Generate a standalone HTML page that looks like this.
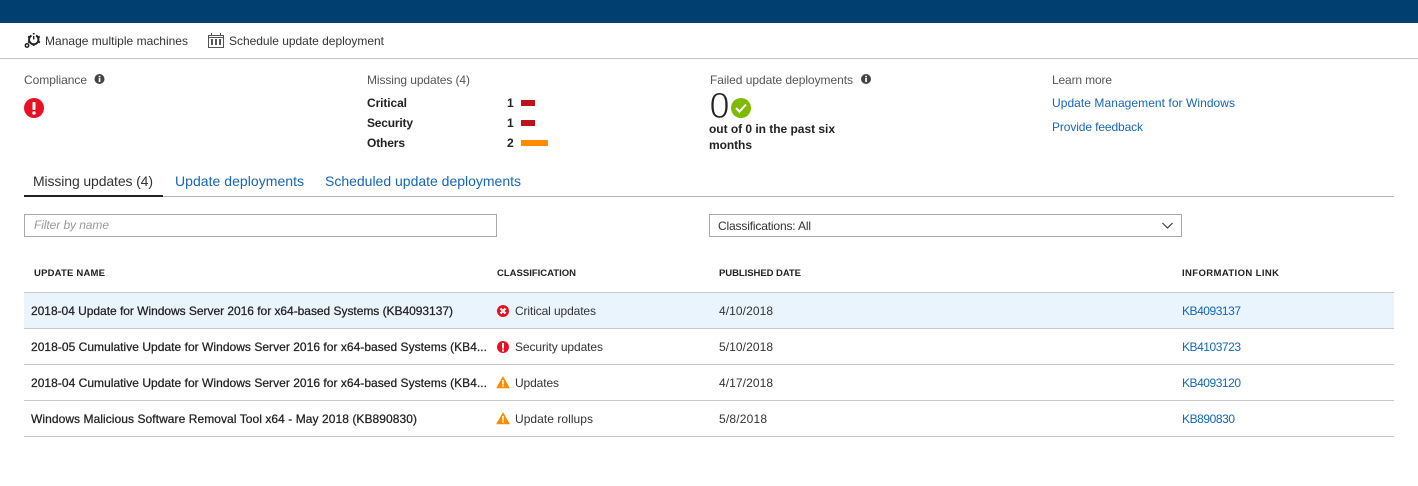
<!DOCTYPE html>
<html><head><meta charset="utf-8"><style>
html,body{margin:0;padding:0;background:#fff;width:1418px;height:486px;overflow:hidden}
svg{display:block}
text{font-family:"Liberation Sans",sans-serif;font-size:12px;fill:#333}
.b{font-weight:bold;fill:#222}
.g{fill:#555}
.l{fill:#1566b8}
.h{font-weight:bold;font-size:9.5px;fill:#222}
.n{fill:#222;stroke:#222;stroke-width:.25px}
.t{font-size:14px}
</style></head><body>
<svg width="1418" height="486" viewBox="0 0 1418 486" xmlns="http://www.w3.org/2000/svg">
<rect width="1418" height="23" fill="#003f6f"/>
<rect y="58" width="1418" height="1" fill="#c4c4c4"/>

<!-- toolbar icons -->
<g fill="none" stroke="#222">
<path d="M31.500 35.500a4.700 4.700 0 1 0 4.500 0" stroke-width="1.900"/>
<path d="M33.700 36v3.500" stroke-width="1.400"/>
<path d="M33.700 33v1.500M39.800 36.500l-1.300 .8M40 42.500l-1.500-.8M33.700 46v-1.500M28 42.500l1.400-.8M28 36.500l1.300 .8" stroke-width="1.800"/>
<circle cx="27" cy="45.500" r="1.700" stroke-width="1.500"/>
</g>
<g fill="none" stroke="#555" stroke-width="1">
<path d="M208.500 35.500h15v12h-15z"/>
<path d="M211.500 33v2.500M220.500 33v2.500M208.500 37.500h15" />
</g>
<g fill="#555"><rect x="211" y="39" width="2" height="6"/><rect x="215" y="39" width="2" height="6"/><rect x="219" y="39" width="2" height="6"/></g>
<text x="45" y="45" textLength="143">Manage multiple machines</text>
<text x="229" y="45" textLength="155">Schedule update deployment</text>

<!-- compliance -->
<text class="g" x="24" y="84" textLength="63">Compliance</text>
<circle cx="99.500" cy="79" r="5" fill="#444"/><rect x="98.700" y="78" width="1.700" height="4" fill="#fff"/><rect x="98.700" y="75.800" width="1.700" height="1.500" fill="#fff"/>
<circle cx="34" cy="108" r="10" fill="#e81123"/><rect x="32.500" y="102" width="3" height="8" rx="1" fill="#fff"/><circle cx="34" cy="113" r="1.700" fill="#fff"/>

<!-- missing -->
<text class="g" x="367" y="84" textLength="103">Missing updates (4)</text>
<text class="b" x="367" y="107" textLength="40">Critical</text>
<text class="b" x="367" y="127" textLength="46">Security</text>
<text class="b" x="367" y="147" textLength="38">Others</text>
<text class="b" x="507" y="107">1</text>
<text class="b" x="507" y="127">1</text>
<text class="b" x="507" y="147">2</text>
<rect x="521" y="100" width="14" height="6" fill="#ba141a"/>
<rect x="521" y="120" width="14" height="6" fill="#ba141a"/>
<rect x="521" y="140" width="27" height="6" fill="#ff8c00"/>

<!-- failed -->
<text class="g" x="710" y="84" textLength="143">Failed update deployments</text>
<circle cx="866" cy="79" r="5" fill="#444"/><rect x="865.200" y="78" width="1.700" height="4" fill="#fff"/><rect x="865.200" y="75.800" width="1.700" height="1.500" fill="#fff"/>
<text x="709.500" y="118" style="font-size:36px;fill:#222;stroke:#fff;stroke-width:.9px">0</text>
<circle cx="741" cy="108" r="10" fill="#7fba00"/><path d="M736 108l3.500 3.500 6.500-7" fill="none" stroke="#fff" stroke-width="2"/>
<text class="b" x="709" y="133" textLength="126">out of 0 in the past six</text>
<text class="b" x="709" y="149" textLength="43">months</text>

<!-- learn -->
<text class="g" x="1052" y="84" textLength="60">Learn more</text>
<text class="l" x="1052" y="107" textLength="183">Update Management for Windows</text>
<text class="l" x="1052" y="131" textLength="91">Provide feedback</text>

<!-- tabs -->
<text class="t" x="33" y="186" textLength="120" style="fill:#333">Missing updates (4)</text>
<text class="t l" x="175" y="186" textLength="129">Update deployments</text>
<text class="t l" x="325" y="186" textLength="196">Scheduled update deployments</text>
<rect x="24" y="196" width="1370" height="1" fill="#b4b4b4"/>
<rect x="24" y="195" width="139" height="2" fill="#222"/>

<!-- filter -->
<rect x="24.500" y="214.500" width="472" height="22" fill="#fff" stroke="#a9a9a9"/>
<text x="34" y="229" textLength="75" style="font-style:italic;fill:#9a9a9a">Filter by name</text>
<rect x="709.500" y="214.500" width="472" height="22" fill="#fff" stroke="#a9a9a9"/>
<text x="718" y="230" textLength="93">Classifications: All</text>
<path d="M1162.500 223l5 5 5-5" fill="none" stroke="#333" stroke-width="1.100"/>

<!-- headers -->
<text class="h" x="34" y="276" textLength="71">UPDATE NAME</text>
<text class="h" x="497" y="276" textLength="79">CLASSIFICATION</text>
<text class="h" x="719" y="276" textLength="82">PUBLISHED DATE</text>
<text class="h" x="1182" y="276" textLength="97">INFORMATION LINK</text>

<!-- rows -->
<rect x="24" y="293" width="1370" height="35" fill="#e9f4fd"/>
<g fill="#c8c8c8">
<rect x="24" y="292" width="1370" height="1"/><rect x="24" y="328" width="1370" height="1"/>
<rect x="24" y="364" width="1370" height="1"/><rect x="24" y="400" width="1370" height="1"/><rect x="24" y="436" width="1370" height="1"/>
</g>

<text class="n" x="31" y="315" textLength="422">2018-04 Update for Windows Server 2016 for x64-based Systems (KB4093137)</text>
<text class="n" x="31" y="351" textLength="456">2018-05 Cumulative Update for Windows Server 2016 for x64-based Systems (KB4...</text>
<text class="n" x="31" y="387" textLength="456">2018-04 Cumulative Update for Windows Server 2016 for x64-based Systems (KB4...</text>
<text class="n" x="31" y="423" textLength="386">Windows Malicious Software Removal Tool x64 - May 2018 (KB890830)</text>

<circle cx="503" cy="311" r="6" fill="#e81123"/><path d="M500.500 308.500l5 5M505.500 308.500l-5 5" stroke="#fff" stroke-width="2"/>
<circle cx="503" cy="347" r="6" fill="#e81123"/><rect x="502" y="343" width="2" height="5.500" fill="#fff"/><rect x="502" y="349.500" width="2" height="2" fill="#fff"/>
<path d="M503 376.500l6.500 11.500h-13z" fill="#ff8c00" stroke="#ff8c00" stroke-width=".5"/><rect x="502.200" y="380" width="1.600" height="4.500" fill="#fff"/><rect x="502.200" y="385.200" width="1.600" height="1.500" fill="#fff"/>
<path d="M503 412.500l6.500 11.500h-13z" fill="#ff8c00" stroke="#ff8c00" stroke-width=".5"/><rect x="502.200" y="416" width="1.600" height="4.500" fill="#fff"/><rect x="502.200" y="421.200" width="1.600" height="1.500" fill="#fff"/>

<text x="515" y="315" textLength="81">Critical updates</text>
<text x="515" y="351" textLength="88">Security updates</text>
<text x="515" y="387" textLength="44">Updates</text>
<text x="515" y="423" textLength="78">Update rollups</text>

<text x="719" y="315" textLength="54">4/10/2018</text>
<text x="719" y="351" textLength="54">5/10/2018</text>
<text x="719" y="387" textLength="54">4/17/2018</text>
<text x="719" y="423" textLength="48">5/8/2018</text>

<text class="l" x="1182" y="315" textLength="59">KB4093137</text>
<text class="l" x="1182" y="351" textLength="59">KB4103723</text>
<text class="l" x="1182" y="387" textLength="59">KB4093120</text>
<text class="l" x="1182" y="423" textLength="53">KB890830</text>
</svg>
</body></html>
